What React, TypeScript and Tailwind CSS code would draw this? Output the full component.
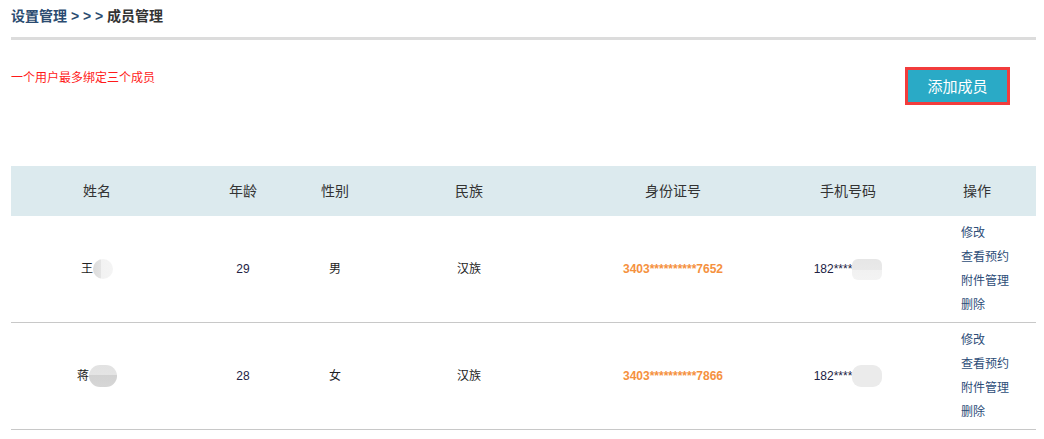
import React from "react";

const font = "font-['Liberation_Sans','Noto_Sans_CJK_SC',sans-serif]";

type Row = {
  name: string;
  blob: string;
  age: string;
  sex: string;
  nation: string;
  id: string;
  phoneBlob: string;
};

const rows: Row[] = [
  {
    name: "王",
    blob: "w-[20px] h-[20px] bg-[linear-gradient(90deg,#dcdcdc_0%,#e4e4e4_40%,#f2f2f2_41%,#f4f4f4_100%)] rounded-full",
    age: "29",
    sex: "男",
    nation: "汉族",
    id: "3403**********7652",
    phoneBlob: "w-[30px] h-[21px] bg-[linear-gradient(180deg,#e6e6e6_0%,#e9e9e9_50%,#f1f1f1_51%,#f3f3f3_100%)] rounded-[6px]",
  },
  {
    name: "蒋",
    blob: "w-[28px] h-[22px] bg-[linear-gradient(180deg,#e2e2e2_0%,#e4e4e4_45%,#d2d2d2_46%,#d6d6d6_100%)] rounded-full",
    age: "28",
    sex: "女",
    nation: "汉族",
    id: "3403**********7866",
    phoneBlob: "w-[30px] h-[22px] bg-[#ebebeb] rounded-[9px]",
  },
];

const cols = "grid grid-cols-[172px_120px_64px_204px_204px_146px_115px]";

export default function App() {
  return (
    <div className={`w-[1044px] h-[439px] bg-white pl-[11px] pr-[8px] ${font}`}>
      <div className="h-[37px] leading-[32px] text-[14px] font-bold">
        <span className="text-[#2b4b70]">设置管理 &gt; &gt; &gt; </span>
        <span className="text-[#333333]">成员管理</span>
      </div>
      <div className="h-[3px] bg-[#dcdcdc]" />
      <div className="flex justify-between items-start pt-[27px]">
        <div className="mt-[4px] text-[12px] leading-[14px] text-[#ff1a1a]">一个用户最多绑定三个成员</div>
        <button className="mr-[26px] w-[105px] h-[38px] border-[3px] border-[#f23c3c] bg-[#2aaac6] text-white text-[15px] leading-none">
          添加成员
        </button>
      </div>
      <div className="mt-[61px]">
        <div className={`${cols} h-[50px] items-center bg-[#dceaee] text-[14px] text-[#333333]`}>
          <div className="text-center">姓名</div>
          <div className="text-center">年龄</div>
          <div className="text-center">性别</div>
          <div className="text-center">民族</div>
          <div className="text-center">身份证号</div>
          <div className="text-center">手机号码</div>
          <div className="text-center pr-[3px]">操作</div>
        </div>
        {rows.map((r) => (
          <div key={r.id} className={`${cols} h-[107px] items-center border-b border-[#c8c8c8] text-[12px] text-[#222222]`}>
            <div className="flex justify-center items-center">
              <span>{r.name}</span>
              <span className={`inline-block ${r.blob}`} />
            </div>
            <div className="text-center text-[#222244]">{r.age}</div>
            <div className="text-center">{r.sex}</div>
            <div className="text-center">{r.nation}</div>
            <div className="text-center font-bold text-[#f5913e]">{r.id}</div>
            <div className="flex justify-center items-center">
              <span className="text-[#222244]">182****</span>
              <span className={`inline-block ${r.phoneBlob}`} />
            </div>
            <div className="pl-[40px] flex flex-col text-[#2d4d78] leading-[24px]">
              <span>修改</span>
              <span>查看预约</span>
              <span>附件管理</span>
              <span>删除</span>
            </div>
          </div>
        ))}
      </div>
    </div>
  );
}
